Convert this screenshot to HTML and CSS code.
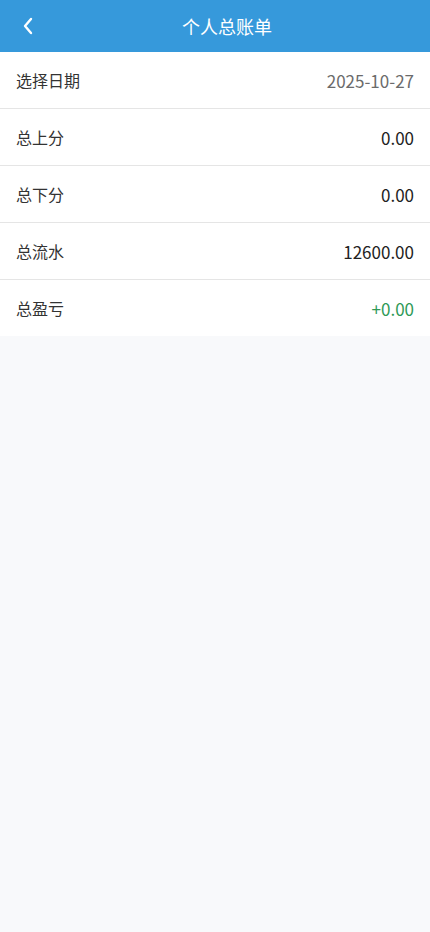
FILE: index.html
```html
<!DOCTYPE html>
<html lang="zh">
<head>
<meta charset="utf-8">
<meta name="viewport" content="width=device-width, initial-scale=1">
<title>个人总账单</title>
<link rel="stylesheet" href="styles.css">
</head>
<body>
<header class="nav">
  <button class="back" aria-label="返回">
    <svg width="12" height="18" viewBox="0 0 12 18"><path d="M9 2 L3 9 L9 16" fill="none" stroke="#fff" stroke-width="2.4" stroke-linecap="round" stroke-linejoin="round"/></svg>
  </button>
  <h1 class="title">个人总账单</h1>
</header>
<main class="list">
  <div class="row"><span class="label">选择日期</span><span class="value date">2025-10-27</span></div>
  <div class="row"><span class="label">总上分</span><span class="value">0.00</span></div>
  <div class="row"><span class="label">总下分</span><span class="value">0.00</span></div>
  <div class="row"><span class="label">总流水</span><span class="value">12600.00</span></div>
  <div class="row last"><span class="label">总盈亏</span><span class="value profit">+0.00</span></div>
</main>
</body>
</html>
```
FILE: styles.css
```css
* { box-sizing: border-box; }
html, body {
  margin: 0;
  padding: 0;
  background: #f8f9fb;
  font-family: "Noto Sans CJK SC", "Noto Sans", sans-serif;
}
body { min-height: 932px; }
.nav {
  height: 52px;
  background: #3699db;
  display: flex;
  align-items: center;
  justify-content: center;
  padding-left: 24px;
  position: relative;
}
.back {
  position: absolute;
  left: 16px;
  top: 0;
  height: 52px;
  width: 30px;
  background: none;
  border: 0;
  padding: 0 0 0 6px;
  display: flex;
  align-items: center;
  cursor: pointer;
}
.title {
  margin: 0;
  color: #fff;
  font-size: 18px;
  font-weight: 400;
}
.list { background: #fff; }
.row {
  height: 57px;
  padding: 0 16px;
  display: flex;
  align-items: center;
  justify-content: space-between;
  border-bottom: 1px solid #e5e5e5;
  font-size: 16px;
  color: #333;
}
.row.last { border-bottom: 0; height: 56px; }
.value { color: #222; font-size: 17px; font-weight: 400; }
.value.date { color: #6b6b6b; }
.value.profit { color: #2f9a57; }
```
